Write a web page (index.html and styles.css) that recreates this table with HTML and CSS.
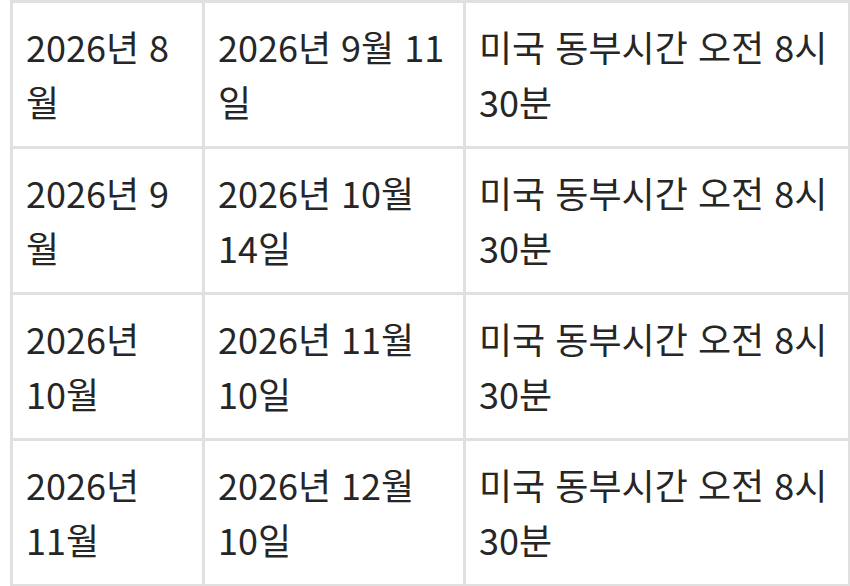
FILE: index.html
```html
<!DOCTYPE html>
<html lang="ko">
<head>
<meta charset="utf-8">
<link rel="stylesheet" href="styles.css">
</head>
<body>
<table class="schedule">
  <colgroup>
    <col class="c1"><col class="c2"><col class="c3">
  </colgroup>
  <tbody>
    <tr><td>2026년 8월</td><td>2026년 9월 11일</td><td>미국 동부시간 오전 8시 30분</td></tr>
    <tr><td>2026년 9월</td><td>2026년 10월 14일</td><td>미국 동부시간 오전 8시 30분</td></tr>
    <tr><td>2026년 10월</td><td>2026년 11월 10일</td><td>미국 동부시간 오전 8시 30분</td></tr>
    <tr><td>2026년 11월</td><td>2026년 12월 10일</td><td>미국 동부시간 오전 8시 30분</td></tr>
  </tbody>
</table>
</body>
</html>
```
FILE: styles.css
```css
html, body {
  margin: 0;
  padding: 0;
  background: #ffffff;
}
body {
  padding-left: 10px;
  font-family: "Noto Sans CJK KR", "Noto Sans", sans-serif;
  color: #262626;
}
.schedule {
  border-collapse: collapse;
  table-layout: fixed;
  width: 838px;
  font-size: 36px;
  line-height: 55px;
}
.schedule .c1 { width: 192px; }
.schedule .c2 { width: 261px; }
.schedule .c3 { width: 385px; }
.schedule td {
  border: 3px solid #e0e0e0;
  padding: 16px 14px 17px 13px;
  vertical-align: top;
  text-align: left;
}
```
